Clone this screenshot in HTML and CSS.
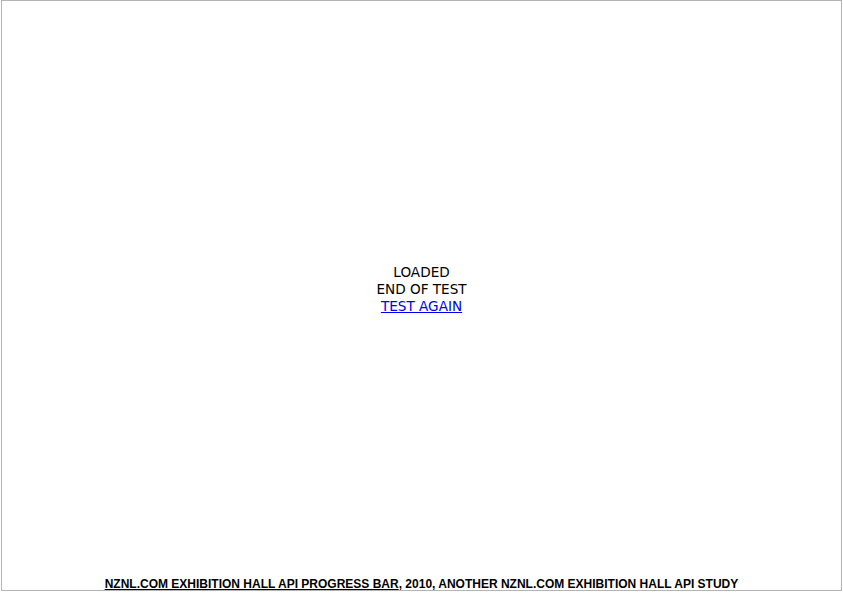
FILE: index.html
```html
<!DOCTYPE html>
<html>
<head>
<meta charset="utf-8">
<link rel="stylesheet" href="styles.css">
</head>
<body>
<div class="frame">
  <div class="center">
    <div class="msg">LOADED</div>
    <div class="msg">END OF TEST</div>
    <a class="again" href="#">TEST AGAIN</a>
  </div>
  <div class="footer"><a href="#" class="flink">NZNL.COM EXHIBITION HALL API PROGRESS BAR</a>, 2010, ANOTHER NZNL.COM EXHIBITION HALL API STUDY</div>
</div>
</body>
</html>
```
FILE: styles.css
```css
html, body {
  margin: 0;
  padding: 0;
  background: #fff;
}
.frame {
  box-sizing: border-box;
  margin-left: 1px;
  width: 841px;
  height: 591px;
  border: 1px solid #b4b4b4;
  display: flex;
  flex-direction: column;
  align-items: center;
}
.center {
  margin-top: 263px;
  display: flex;
  flex-direction: column;
  align-items: center;
  font-family: "DejaVu Sans", sans-serif;
  font-size: 13.6px;
  line-height: 17px;
  color: #000;
  flex: 1;
}
.again {
  color: #0000ee;
  text-decoration: underline;
}
.footer {
  font-family: "Liberation Sans", Arial, sans-serif;
  font-weight: bold;
  font-size: 12px;
  line-height: 14px;
  color: #000;
  margin-bottom: -1px;
}
.flink {
  color: #000;
  text-decoration: underline;
}
```
